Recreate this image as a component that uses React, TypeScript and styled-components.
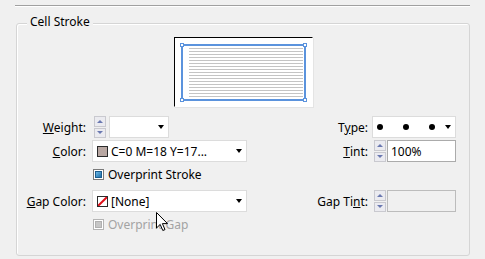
import React, { ReactElement } from 'react';
import styled, { createGlobalStyle } from 'styled-components';

const Global = createGlobalStyle`
  body {
    margin: 0;
    background: #f0f0f0;
    font-family: "Noto Sans", "Open Sans", sans-serif;
    font-size: 12px;
    color: #000;
  }
`;

const Page = styled.div`
  position: relative;
  width: 485px;
  height: 259px;
  overflow: hidden;
  background: #f0f0f0;
`;

const TopRule = styled.div`
  margin: 5px 0 0 15px;
  width: 455px;
  height: 1px;
  background: #a0a0a0;
  border-bottom: 1px solid #fff;
`;

const Group = styled.div`
  position: relative;
  box-sizing: border-box;
  margin: 16px 0 0 16px;
  width: 454px;
  height: 233px;
  border: 1px solid #d5d5d5;
  border-radius: 3px;
  box-shadow: inset 1px 1px 0 #fff;
`;

const Legend = styled.span`
  position: absolute;
  top: -10px;
  left: 10px;
  padding: 0 3px;
  line-height: 16px;
  background: #f0f0f0;
`;

const Preview = styled.div`
  box-sizing: border-box;
  display: flex;
  width: 139px;
  height: 70px;
  margin: 13px auto 0;
  padding: 6px 6px 5px;
  background: #fff;
  border: 1px solid;
  border-color: #000 #fff #fff #000;
  box-shadow: 1px 1px 0 #e4e4e4;
`;

const CellRect = styled.div`
  position: relative;
  flex: 1;
  border: 2px solid #5b93dd;
  padding: 2px 1px 2px 6px;
`;

const Lines = styled.div`
  height: 100%;
  background: repeating-linear-gradient(to bottom, #c4c4c4 0 1px, #fff 1px 3px);
`;

const Handle = styled.i<{ $x: 'left' | 'right'; $y: 'top' | 'bottom' }>`
  position: absolute;
  ${(p) => p.$x}: -3px;
  ${(p) => p.$y}: -3px;
  width: 2px;
  height: 2px;
  background: #fff;
  border: 1px solid #5b93dd;
`;

const Form = styled.div`
  display: grid;
  grid-template-columns: 71px 155px 1fr auto 84px;
  grid-template-rows: 22px 22px 24px 22px 20px;
  column-gap: 4px;
  row-gap: 2px;
  margin-top: 9px;
  padding-right: 13px;
`;

const Label = styled.span<{ $col?: number }>`
  grid-column: ${(p) => p.$col ?? 1};
  align-self: center;
  justify-self: end;
  white-space: nowrap;
  margin-right: ${(p) => (p.$col ? 0 : 2)}px;
`;

const Control = styled.div<{ $col: number }>`
  grid-column: ${(p) => p.$col};
  display: flex;
  align-items: stretch;
  gap: 1px;
`;

const SpinWrap = styled.div`
  display: flex;
  flex-direction: column;
  gap: 1px;
  width: 12px;
  margin-left: 2px;
`;

const SpinBtn = styled.div<{ $down?: boolean }>`
  flex: 1;
  display: flex;
  align-items: center;
  justify-content: center;
  background: #ebebf0;
  border: 1px solid #c9c9cf;
  &::after {
    content: '';
    border-left: 3px solid transparent;
    border-right: 3px solid transparent;
    ${(p) => (p.$down ? 'border-top' : 'border-bottom')}: 3px solid #6a78b0;
  }
`;

function Spinner(): ReactElement {
  return (
    <SpinWrap>
      <SpinBtn />
      <SpinBtn $down />
    </SpinWrap>
  );
}

const Drop = styled.div<{ $w?: number }>`
  box-sizing: border-box;
  display: flex;
  align-items: center;
  gap: 3px;
  width: ${(p) => (p.$w ? `${p.$w}px` : '100%')};
  padding: 0 4px;
  background: #fff;
  border: 1px solid #dcdcdc;
  white-space: nowrap;
`;

const Arrow = styled.i`
  margin-left: auto;
  border-left: 3.5px solid transparent;
  border-right: 3.5px solid transparent;
  border-top: 4px solid #000;
`;

const Swatch = styled.span<{ $fill: string }>`
  position: relative;
  box-sizing: border-box;
  width: 11px;
  height: 11px;
  flex: none;
  background: ${(p) => p.$fill};
  border: 1px solid #2a2a2a;
  overflow: hidden;
`;

const Slash = styled.svg`
  display: block;
`;

const Dot = styled.i`
  width: 6px;
  height: 6px;
  border-radius: 50%;
  background: #000;
  flex: none;
`;

const Dots = styled.div`
  display: flex;
  gap: 20px;
`;

const Field = styled.div<{ $disabled?: boolean }>`
  box-sizing: border-box;
  flex: 1;
  display: flex;
  align-items: center;
  padding: 0 3px;
  background: ${(p) => (p.$disabled ? '#f0f0f0' : '#fff')};
  border: 1px solid ${(p) => (p.$disabled ? '#bcbcbc' : '#ababab')};
`;

const CheckRow = styled.label<{ $disabled?: boolean }>`
  grid-column: 2 / span 3;
  align-self: start;
  display: flex;
  align-items: center;
  gap: 4px;
  margin: 2px 0 0 1px;
  color: ${(p) => (p.$disabled ? '#a3a3a3' : '#000')};
`;

const Box = styled.span<{ $disabled?: boolean }>`
  box-sizing: border-box;
  width: 11px;
  height: 11px;
  padding: 1px;
  background: #fff;
  border: 1px solid ${(p) => (p.$disabled ? '#b4b4b4' : '#7a7a7a')};
  &::after {
    content: '';
    display: block;
    width: 100%;
    height: 100%;
    box-sizing: border-box;
    border: 1px solid ${(p) => (p.$disabled ? '#b0b0b0' : '#1c5d8e')};
    background: ${(p) =>
      p.$disabled ? '#c6c6c6' : 'linear-gradient(135deg, #6cb8e6, #1f70aa)'};
  }
`;

const Cursor = styled.svg`
  position: absolute;
  left: 156px;
  top: 212px;
`;

export default function App(): ReactElement {
  return (
    <Page>
      <Global />
      <TopRule />
      <Group>
        <Legend>Cell Stroke</Legend>
        <Preview>
          <CellRect>
            <Lines />
            <Handle $x="left" $y="top" />
            <Handle $x="right" $y="top" />
            <Handle $x="left" $y="bottom" />
            <Handle $x="right" $y="bottom" />
          </CellRect>
        </Preview>

        <Form>
          <Label><u>W</u>eight:</Label>
          <Control $col={2}>
            <Spinner />
            <Drop $w={60} style={{ marginLeft: 2 }}>
              <Arrow />
            </Drop>
          </Control>
          <Label $col={4}>T<u>y</u>pe:</Label>
          <Control $col={5}>
            <Drop>
              <Dots>
                <Dot />
                <Dot />
                <Dot />
              </Dots>
              <Arrow />
            </Drop>
          </Control>

          <Label><u>C</u>olor:</Label>
          <Control $col={2}>
            <Drop>
              <Swatch $fill="#b8a7a2" />
              <span>C=0 M=18 Y=17...</span>
              <Arrow />
            </Drop>
          </Control>
          <Label $col={4}><u>T</u>int:</Label>
          <Control $col={5}>
            <Spinner />
            <Field>100%</Field>
          </Control>

          <CheckRow>
            <Box />
            Overprint Stroke
          </CheckRow>

          <Label><u>G</u>ap Color:</Label>
          <Control $col={2}>
            <Drop>
              <Swatch $fill="#fff">
                <Slash width="9" height="9" viewBox="0 0 9 9">
                  <line x1="0" y1="9" x2="9" y2="0" stroke="#e0101a" strokeWidth="2" />
                </Slash>
              </Swatch>
              <span>[None]</span>
              <Arrow />
            </Drop>
          </Control>
          <Label $col={4}>Gap Ti<u>n</u>t:</Label>
          <Control $col={5}>
            <Spinner />
            <Field $disabled />
          </Control>

          <CheckRow $disabled>
            <Box $disabled />
            Overprint Gap
          </CheckRow>
        </Form>
      </Group>

      <Cursor width="13" height="20" viewBox="0 0 13 20">
        <path
          d="M0.5 0.5 L0.5 16 L4.2 12.4 L6.8 18.5 L9 17.6 L6.4 11.6 L11.5 11.6 Z"
          fill="#fff"
          stroke="#000"
          strokeWidth="1"
          strokeLinejoin="miter"
        />
      </Cursor>
    </Page>
  );
}
